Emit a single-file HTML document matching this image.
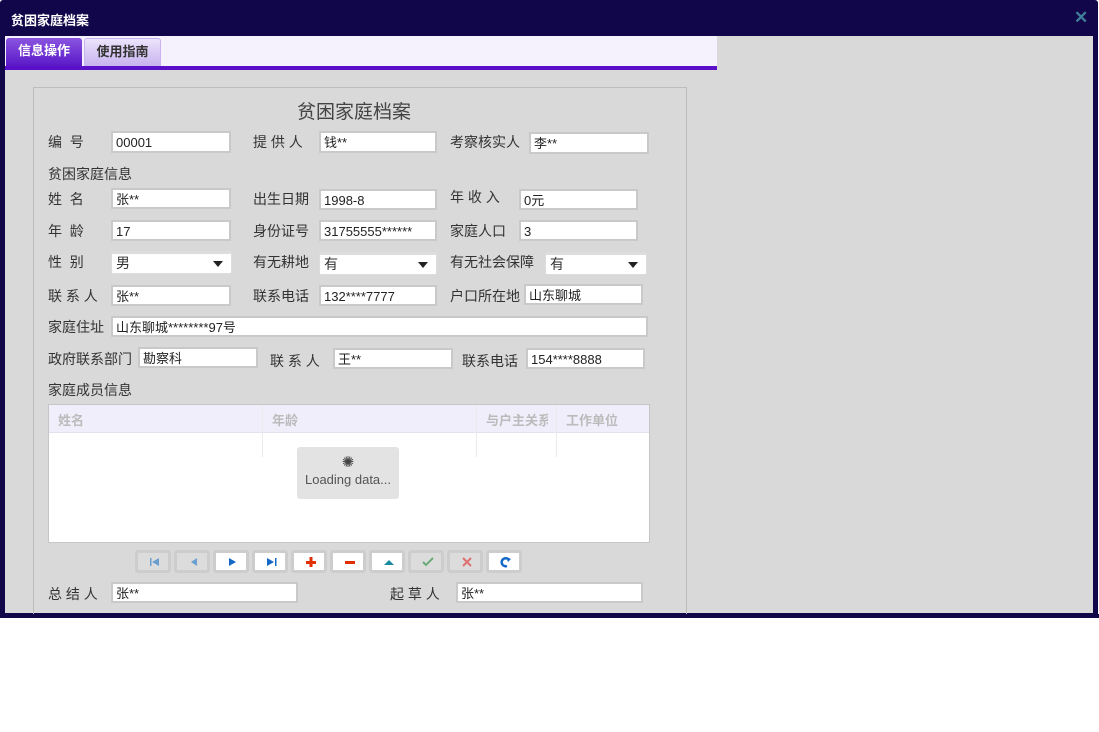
<!DOCTYPE html>
<html><head><meta charset="utf-8"><style>
*{margin:0;padding:0;box-sizing:border-box}
body{width:1099px;height:732px;background:#fff;position:relative;overflow:hidden;font-family:"Liberation Sans","Noto Sans CJK SC",sans-serif;color:#333}
.a{position:absolute}
.win{left:0;top:0;width:1098px;height:618px;background:#12064a;border-radius:3px}
.title{left:11px;top:10px;color:#fff;font-size:13px;font-weight:bold}
.close{left:1074px;top:8px;color:#3f7f9a;font-size:17px;font-weight:bold}
.body{left:5px;top:36px;width:1088px;height:577px;background:#d9d9d9}
.strip{left:5px;top:36px;width:712px;height:30px;background:#f5f2fe}
.bar{left:5px;top:66px;width:712px;height:4px;background:#5a0fc8}
.tab{top:38px;height:28px;font-size:13px;font-weight:bold;text-align:center;line-height:26px;border-radius:3px 3px 0 0}
.panel{left:33px;top:87px;width:654px;height:540px;border:1px solid #bdbdbd}
.lbl{font-size:14px;color:#333;white-space:nowrap}
.in{background:#fff;border:2px solid #c9c9c9;font-size:13px;line-height:19px;padding-left:3px;color:#222;white-space:nowrap;overflow:hidden}
.sel{background:#fff;border:1px solid #ddd;border-top:3px solid #ddd;font-size:14px;padding-left:4px;line-height:18px;border-radius:2px}
.sel:after{content:"";position:absolute;right:8px;top:7px;border:5px solid transparent;border-top:6px solid #222}
.btn{top:550px;width:36px;height:23px;background:#fff;border:3px solid #cdcdcd;border-radius:3px}
.btn svg{position:absolute;left:10px;top:3px}
.btn.d{background:#dcdcdc}
</style></head><body>
<div class="a win"></div>
<div class="a title">贫困家庭档案</div>
<div class="a close">✕</div>
<div class="a body"></div>
<div class="a strip"></div>
<div class="a bar"></div>
<div class="a tab" style="left:6px;width:76px;background:linear-gradient(#8a55e0,#5a18c8);color:#fff">信息操作</div>
<div class="a tab" style="left:84px;width:77px;background:linear-gradient(#ece4fb,#c9b4ef);color:#333;border:1px solid #c7b3ee">使用指南</div>
<div class="a panel"></div>
<div class="a" style="left:297px;top:97px;font-size:19px;color:#444">贫困家庭档案</div>

<div class="a lbl" style="left:48px;top:132px">编&nbsp;&nbsp;号</div>
<div class="a in" style="left:111px;top:131px;width:120px;height:22px">00001</div>
<div class="a lbl" style="left:253px;top:132px">提&nbsp;供&nbsp;人</div>
<div class="a in" style="left:319px;top:131px;width:118px;height:22px">钱**</div>
<div class="a lbl" style="left:450px;top:132px">考察核实人</div>
<div class="a in" style="left:529px;top:132px;width:120px;height:22px">李**</div>

<div class="a lbl" style="left:48px;top:164px">贫困家庭信息</div>

<div class="a lbl" style="left:48px;top:189px">姓&nbsp;&nbsp;名</div>
<div class="a in" style="left:111px;top:188px;width:120px;height:21px">张**</div>
<div class="a lbl" style="left:253px;top:189px">出生日期</div>
<div class="a in" style="left:319px;top:189px;width:118px;height:21px">1998-8</div>
<div class="a lbl" style="left:450px;top:187px">年&nbsp;收&nbsp;入</div>
<div class="a in" style="left:519px;top:189px;width:119px;height:21px">0元</div>

<div class="a lbl" style="left:48px;top:221px">年&nbsp;&nbsp;龄</div>
<div class="a in" style="left:111px;top:220px;width:120px;height:21px">17</div>
<div class="a lbl" style="left:253px;top:221px">身份证号</div>
<div class="a in" style="left:319px;top:220px;width:118px;height:21px">31755555******</div>
<div class="a lbl" style="left:450px;top:221px">家庭人口</div>
<div class="a in" style="left:519px;top:220px;width:119px;height:21px">3</div>

<div class="a lbl" style="left:48px;top:252px">性&nbsp;&nbsp;别</div>
<div class="a sel" style="left:111px;top:251px;width:121px;height:23px">男</div>
<div class="a lbl" style="left:253px;top:252px">有无耕地</div>
<div class="a sel" style="left:319px;top:252px;width:118px;height:23px">有</div>
<div class="a lbl" style="left:450px;top:252px">有无社会保障</div>
<div class="a sel" style="left:545px;top:252px;width:102px;height:23px">有</div>

<div class="a lbl" style="left:48px;top:286px">联&nbsp;系&nbsp;人</div>
<div class="a in" style="left:111px;top:285px;width:120px;height:21px">张**</div>
<div class="a lbl" style="left:253px;top:286px">联系电话</div>
<div class="a in" style="left:319px;top:285px;width:118px;height:21px">132****7777</div>
<div class="a lbl" style="left:450px;top:286px">户口所在地</div>
<div class="a in" style="left:524px;top:284px;width:119px;height:21px">山东聊城</div>

<div class="a lbl" style="left:48px;top:317px">家庭住址</div>
<div class="a in" style="left:111px;top:316px;width:537px;height:21px">山东聊城********97号</div>

<div class="a lbl" style="left:48px;top:349px">政府联系部门</div>
<div class="a in" style="left:138px;top:347px;width:120px;height:21px">勘察科</div>
<div class="a lbl" style="left:270px;top:351px">联&nbsp;系&nbsp;人</div>
<div class="a in" style="left:333px;top:348px;width:120px;height:21px">王**</div>
<div class="a lbl" style="left:462px;top:351px">联系电话</div>
<div class="a in" style="left:526px;top:348px;width:119px;height:21px">154****8888</div>

<div class="a lbl" style="left:48px;top:380px">家庭成员信息</div>

<div class="a" style="left:48px;top:404px;width:602px;height:139px;background:#fff;border:1px solid #c6c6c6"></div>
<div class="a" style="left:49px;top:405px;width:600px;height:28px;background:#f1eefb;border-bottom:1px solid #e4e0f0"></div>
<div class="a" style="left:262px;top:405px;width:1px;height:52px;background:#ebebeb"></div>
<div class="a" style="left:476px;top:405px;width:1px;height:52px;background:#ebebeb"></div>
<div class="a" style="left:556px;top:405px;width:1px;height:52px;background:#ebebeb"></div>
<div class="a" style="left:58px;top:410px;font-size:13px;font-weight:bold;color:#bbb">姓名</div>
<div class="a" style="left:272px;top:410px;font-size:13px;font-weight:bold;color:#bbb">年龄</div>
<div class="a" style="left:486px;top:410px;width:62px;overflow:hidden;white-space:nowrap;font-size:13px;font-weight:bold;color:#bbb">与户主关系</div>
<div class="a" style="left:566px;top:410px;font-size:13px;font-weight:bold;color:#bbb">工作单位</div>
<div class="a" style="left:297px;top:447px;width:102px;height:52px;background:#e3e3e3;border-radius:3px;text-align:center;font-size:13px;color:#555">
<div style="margin-top:6px;font-size:15px;color:#444">✺</div><div style="margin-top:1px">Loading data...</div></div>

<div class="a btn d" style="left:135px"><svg width="14" height="12"><rect x="2" y="2" width="1.5" height="8" fill="#6a9fd0"/><path d="M11 2L4 6L11 10Z" fill="#6a9fd0"/></svg></div>
<div class="a btn d" style="left:174px"><svg width="14" height="12"><path d="M10 2L4 6L10 10Z" fill="#6a9fd0"/></svg></div>
<div class="a btn" style="left:213px"><svg width="14" height="12"><path d="M3 2L10 6L3 10Z" fill="#1469c8"/></svg></div>
<div class="a btn" style="left:252px"><svg width="14" height="12"><path d="M2 2L9 6L2 10Z" fill="#1469c8"/><rect x="10" y="2" width="1.5" height="8" fill="#1469c8"/></svg></div>
<div class="a btn" style="left:291px"><svg width="14" height="12"><rect x="2" y="5" width="10" height="3" fill="#e03000"/><rect x="5.5" y="1" width="3" height="10" fill="#e03000"/></svg></div>
<div class="a btn" style="left:330px"><svg width="14" height="12"><rect x="2" y="5" width="10" height="3" fill="#e03000"/></svg></div>
<div class="a btn" style="left:369px"><svg width="14" height="12"><path d="M2 9L7 4L12 9Z" fill="#1a8aa0"/></svg></div>
<div class="a btn d" style="left:408px"><svg width="14" height="12"><path d="M2 6L5 9L12 2" stroke="#6aaa78" stroke-width="2" fill="none"/></svg></div>
<div class="a btn d" style="left:447px"><svg width="14" height="12"><path d="M3 2L11 10M11 2L3 10" stroke="#e07070" stroke-width="2"/></svg></div>
<div class="a btn" style="left:486px"><svg width="14" height="12"><path d="M10 4A4 4 0 1 0 8 10" stroke="#1469c8" stroke-width="2.5" fill="none"/><path d="M7 1L12 3L9 6Z" fill="#1469c8"/></svg></div>

<div class="a lbl" style="left:48px;top:584px">总&nbsp;结&nbsp;人</div>
<div class="a in" style="left:111px;top:582px;width:187px;height:21px">张**</div>
<div class="a lbl" style="left:390px;top:584px">起&nbsp;草&nbsp;人</div>
<div class="a in" style="left:456px;top:582px;width:187px;height:21px">张**</div>

<div class="a" style="left:0;top:614px;width:1099px;height:4px;background:#12064a"></div>
<div class="a" style="left:0;top:618px;width:1099px;height:114px;background:#fff"></div>
</body></html>
